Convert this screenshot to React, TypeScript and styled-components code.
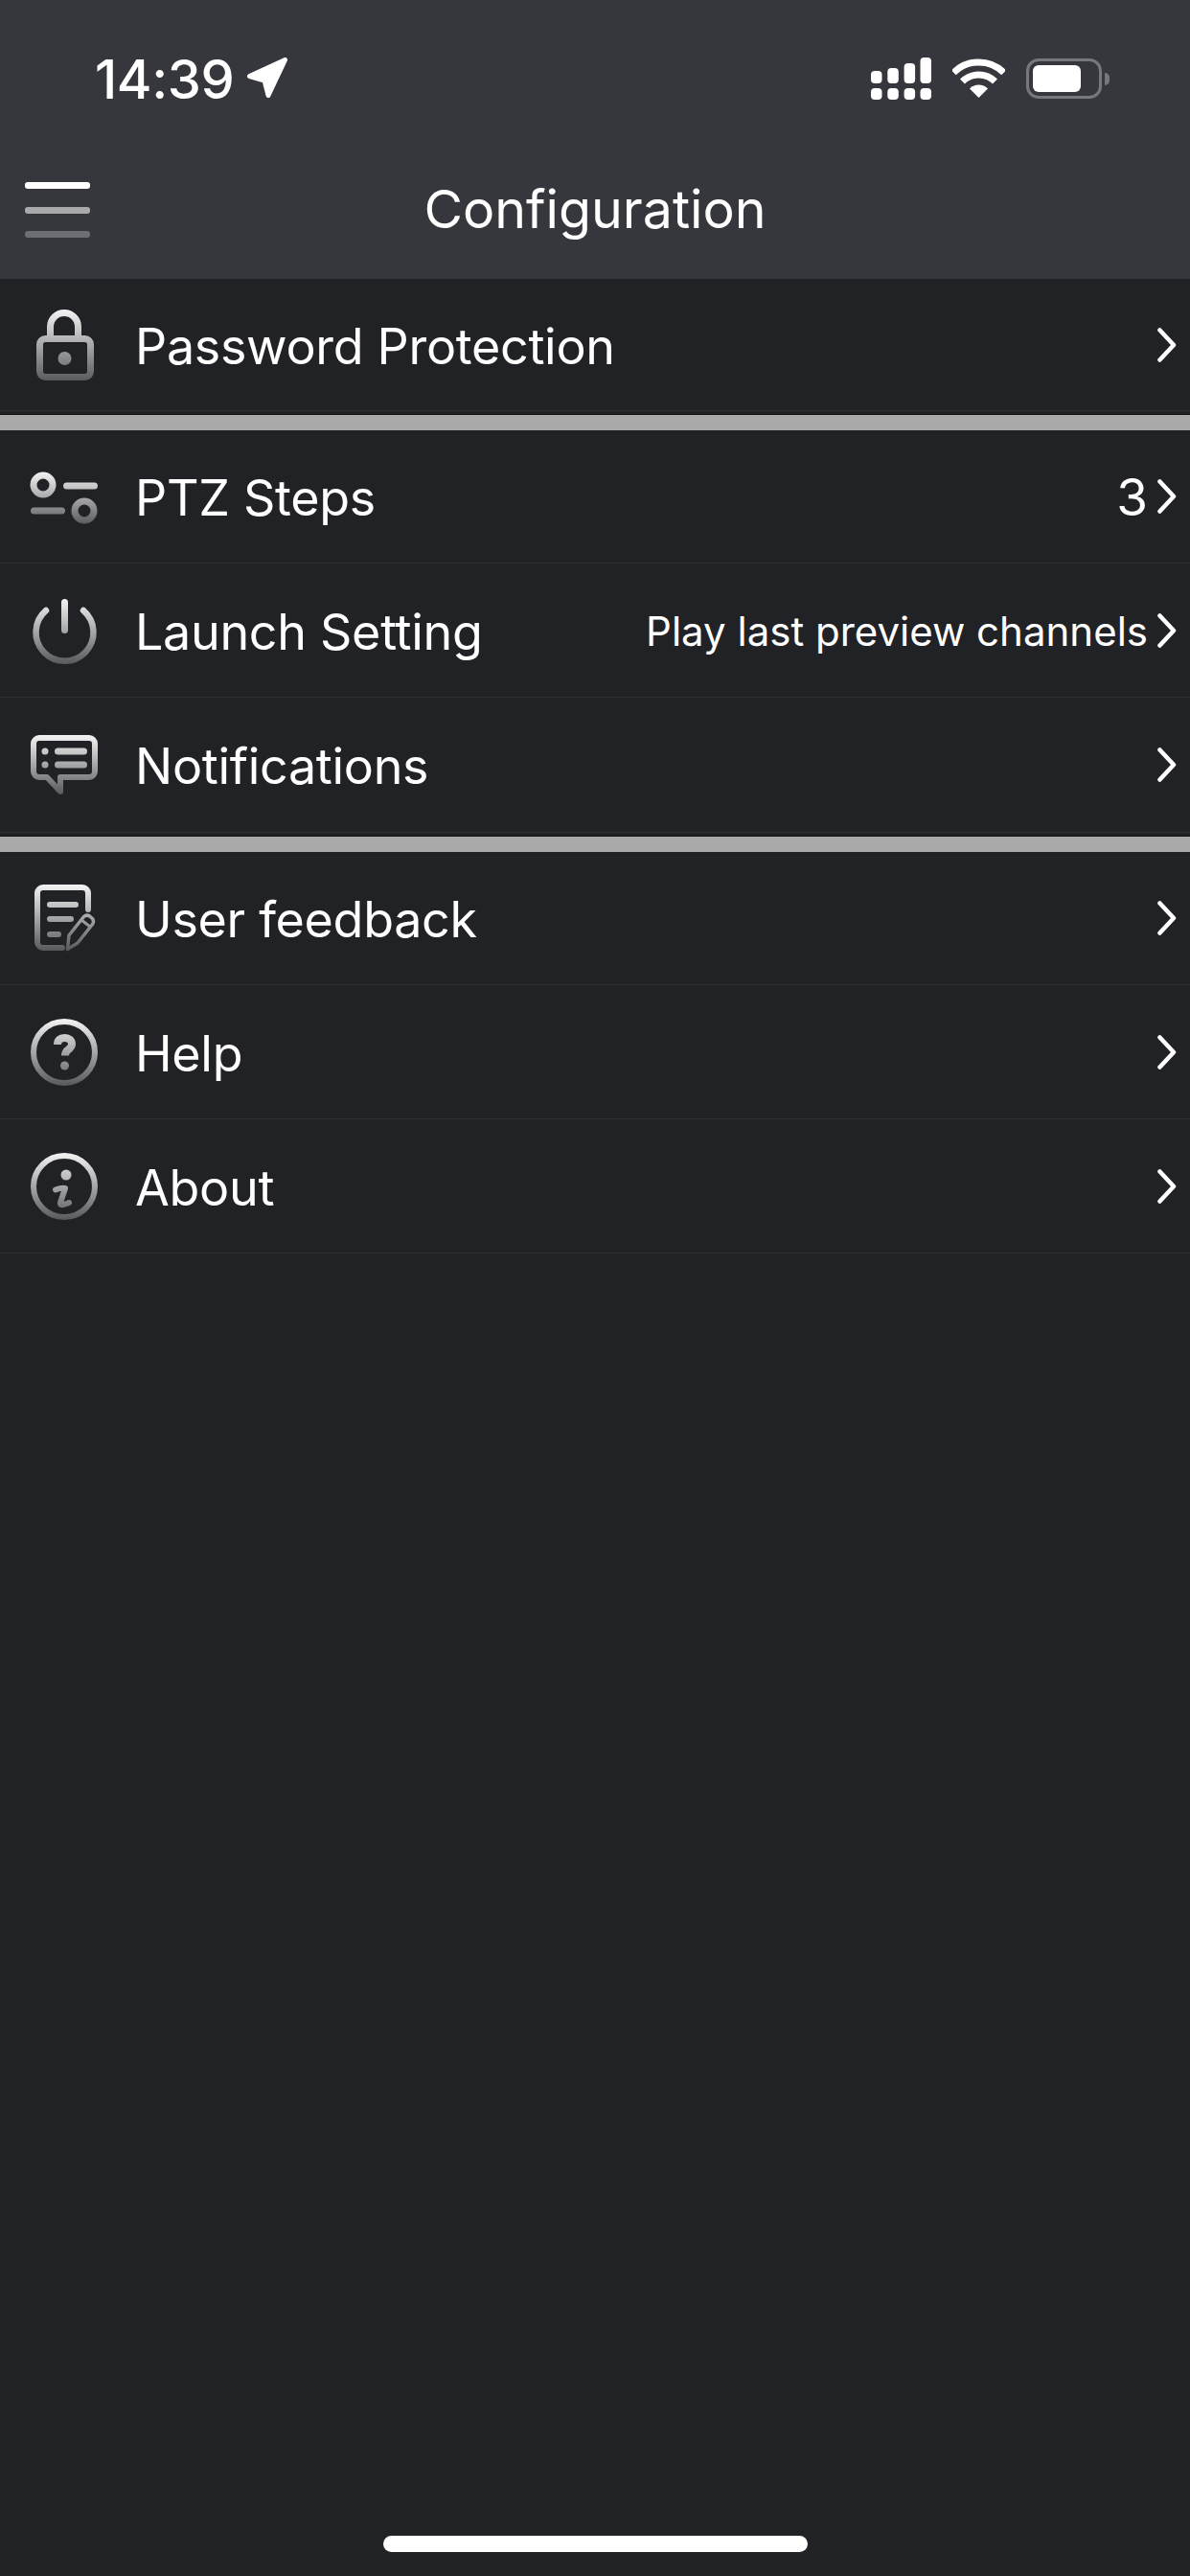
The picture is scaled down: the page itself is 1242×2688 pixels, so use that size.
import React, { useId } from 'react';
import styled, { createGlobalStyle } from 'styled-components';

const GlobalStyle = createGlobalStyle`
  html, body {
    margin: 0;
    padding: 0;
    background: #212226;
  }
  * {
    box-sizing: border-box;
  }
`;

const Page = styled.div`
  width: 1242px;
  height: 2688px;
  display: flex;
  flex-direction: column;
  overflow: hidden;
  background: #212226;
  color: #fff;
  font-family: Inter, Roboto, 'Liberation Sans', sans-serif;
`;

const Header = styled.header`
  height: 291px;
  flex: none;
  background: #36373d;
`;

const StatusBar = styled.div`
  height: 166px;
  padding: 60px 92px 0 99px;
  display: flex;
  justify-content: space-between;
  align-items: flex-start;
`;

const StatusLeft = styled.div`
  display: flex;
  align-items: flex-start;
  gap: 14px;
`;

const StatusRight = styled.div`
  display: flex;
  align-items: flex-start;
  gap: 22px;
`;

const Time = styled.span`
  font-size: 56px;
  line-height: 46px;
  font-weight: 500;
  letter-spacing: -0.4px;
`;

const Battery = styled.div`
  width: 79px;
  height: 42px;
  margin-top: 1px;
  padding: 4px;
  position: relative;
  border: 3px solid #77787c;
  border-radius: 13px;

  &::after {
    content: '';
    position: absolute;
    right: -11px;
    top: 12px;
    width: 5px;
    height: 13px;
    border-radius: 0 6px 6px 0;
    background: #77787c;
  }
`;

const BatteryFill = styled.div`
  width: 50px;
  height: 100%;
  border-radius: 6px;
  background: #fff;
`;

const NavBar = styled.div`
  height: 125px;
  padding-left: 26px;
  display: grid;
  grid-template-columns: 68px 1fr 68px;
  padding-right: 26px;
`;

const MenuButton = styled.div`
  height: 58px;
  margin-top: 24px;
  display: flex;
  flex-direction: column;
  justify-content: space-between;
`;

const MenuLine = styled.span<{ $color: string }>`
  display: block;
  height: 7px;
  border-radius: 3px;
  background: ${({ $color }) => $color};
`;

const Title = styled.h1`
  margin: 0;
  padding-top: 19px;
  text-align: center;
  font-size: 55.5px;
  line-height: 66px;
  font-weight: 400;
`;

const Section = styled.section`
  flex: none;
`;

const Row = styled.div<{ $height: number }>`
  height: ${({ $height }) => $height}px;
  padding-right: 14px;
  display: flex;
  align-items: center;
  border-bottom: 1px solid #2d2e31;
`;

const IconSlot = styled.div`
  width: 141px;
  flex: none;
  display: flex;
  justify-content: center;
  padding-right: 5px;
`;

const Label = styled.span`
  flex: 1;
  padding-top: 4px;
  font-size: 52px;
  line-height: 64px;
  letter-spacing: -0.3px;
`;

const Value = styled.span<{ $small?: boolean }>`
  padding-top: 2px;
  font-size: ${({ $small }) => ($small ? 42 : 53)}px;
  line-height: 64px;
  margin-right: 10px;
`;

const Separator = styled.div`
  flex: none;
  height: 17px;
  margin-top: 3px;
  background: #a9a9a9;
  border-top: 1px solid #0f0f11;
`;

const Spacer = styled.div`
  flex: 1;
`;

const HomeBar = styled.div`
  width: 443px;
  height: 17px;
  margin: 0 auto 25px;
  flex: none;
  border-radius: 9px;
  background: #fff;
`;

const Paint = ({
  y1 = 3,
  y2 = 78,
  children,
}: {
  y1?: number;
  y2?: number;
  children: (paint: string) => React.ReactNode;
}) => {
  const id = useId();
  const paint = `url(#${id})`;
  return (
    <svg width="80" height="80" viewBox="0 0 80 80" fill="none" strokeLinecap="round" strokeLinejoin="round">
      <defs>
        <linearGradient id={id} gradientUnits="userSpaceOnUse" x1="0" x2="0" y1={y1} y2={y2}>
          <stop offset="0" stopColor="#f4f4f4" />
          <stop offset="1" stopColor="#58595c" />
        </linearGradient>
      </defs>
      {children(paint)}
    </svg>
  );
};

const LockIcon = () => (
  <Paint>
    {(p) => (
      <>
        <rect x="13.5" y="33.5" width="53" height="40" rx="6" stroke={p} strokeWidth="7" />
        <path d="M24.5 30V21a14.5 14.5 0 0 1 29 0v9" stroke={p} strokeWidth="7" strokeLinecap="butt" />
        <circle cx="39.5" cy="54" r="7" fill={p} />
      </>
    )}
  </Paint>
);

const StepsIcon = () => (
  <Paint y1={14} y2={70}>
    {(p) => (
      <>
        <circle cx="17" cy="28" r="10" stroke={p} strokeWidth="7" />
        <path d="M41.5 29h29" stroke={p} strokeWidth="7" />
        <path d="M7.5 55h29" stroke={p} strokeWidth="7" />
        <circle cx="60" cy="55" r="10" stroke={p} strokeWidth="7" />
      </>
    )}
  </Paint>
);

const PowerIcon = () => (
  <Paint y1={7} y2={75}>
    {(p) => (
      <>
        <path d="M39.5 10.5v29" stroke={p} strokeWidth="7" />
        <path d="M20 19A30 30 0 1 0 59 19" stroke={p} strokeWidth="6.5" />
      </>
    )}
  </Paint>
);

const MessageIcon = () => (
  <Paint y1={9} y2={71}>
    {(p) => (
      <>
        <path
          d="M13 12h52a6 6 0 0 1 6 6v29a6 6 0 0 1-6 6H35v15L21 53h-8a6 6 0 0 1-6-6V18a6 6 0 0 1 6-6Z"
          stroke={p}
          strokeWidth="6"
        />
        <circle cx="19" cy="26" r="3.5" fill={p} />
        <circle cx="19" cy="40" r="3.5" fill={p} />
        <path d="M32.5 26h27M32.5 40h27" stroke={p} strokeWidth="7" />
      </>
    )}
  </Paint>
);

const FeedbackIcon = () => (
  <Paint y1={5} y2={74}>
    {(p) => (
      <>
        <path d="M64 31V14a6 6 0 0 0-6-6H17a6 6 0 0 0-6 6v51a6 6 0 0 0 6 6h20" stroke={p} strokeWidth="6" />
        <path d="M24 26h27M24 41h22M24 57h9" stroke={p} strokeWidth="6" />
        <path d="M42.5 72.5 44 58l15.5-19.5q3-2.5 6-.5l3 2.5q2 3 0 6L53 66Z" stroke={p} strokeWidth="3.5" />
        <path d="M57 42l9 7" stroke={p} strokeWidth="3" />
      </>
    )}
  </Paint>
);

const HelpIcon = () => (
  <Paint y1={5} y2={75}>
    {(p) => (
      <>
        <circle cx="39" cy="40" r="32" stroke={p} strokeWidth="6" />
        <path
          d="M32 32c0-5 3-7 7.5-7S47 27.500 47 31.500c0 3-2 4.500-4 6s-3 3-3 6"
          stroke={p}
          strokeWidth="8"
          strokeLinecap="butt"
        />
        <circle cx="39.500" cy="54" r="4.500" fill={p} />
      </>
    )}
  </Paint>
);

const InfoIcon = () => (
  <Paint y1={5} y2={75}>
    {(p) => (
      <>
        <circle cx="39" cy="40" r="32" stroke={p} strokeWidth="6" />
        <circle cx="41" cy="28" r="5.500" fill={p} />
        <path d="M30 43.500c4-1.500 7-2 10-1.500l-5 15c-.5 3 2 3 9 0" stroke={p} strokeWidth="6" />
      </>
    )}
  </Paint>
);

const LocationArrow = () => (
  <svg width="42" height="42" viewBox="0 0 42 42">
    <path
      d="M2.500 19.500 39.500 2.500 22 39.500 18 24Z"
      fill="#fff"
      stroke="#fff"
      strokeWidth="5"
      strokeLinejoin="round"
    />
  </svg>
);

const SignalIcon = () => (
  <svg width="63" height="44" viewBox="0 0 63 44" fill="#fff">
    <rect x="0" y="14" width="11.500" height="13" rx="4" />
    <rect x="17.300" y="11" width="11.500" height="16" rx="4" />
    <rect x="34.600" y="6" width="11.500" height="21" rx="4" />
    <rect x="51.500" y="0" width="11.500" height="27" rx="4" />
    <rect x="0" y="32" width="11.500" height="12" rx="4" />
    <rect x="17.300" y="32" width="11.500" height="12" rx="4" />
    <rect x="34.600" y="32" width="11.500" height="12" rx="4" />
    <rect x="51.500" y="32" width="11.500" height="12" rx="4" />
  </svg>
);

const WifiIcon = () => (
  <svg width="55" height="42" viewBox="0 0 55 42" fill="none" style={{ marginTop: 1 }}>
    <path d="M1.300 14.800a37 37 0 0 1 52.400 0" stroke="#fff" strokeWidth="7" />
    <path d="M10.500 24a24 24 0 0 1 34 0" stroke="#fff" strokeWidth="7" />
    <path d="M27.500 41 18 31.500a13.500 13.500 0 0 1 19 0Z" fill="#fff" />
  </svg>
);

const Chevron = () => (
  <svg width="20" height="36" viewBox="0 0 20 36" fill="none">
    <path d="M2.500 2.500 17 18 2.500 33.500" stroke="#fff" strokeWidth="4.500" strokeLinecap="round" strokeLinejoin="round" />
  </svg>
);

type Item = {
  label: string;
  icon: React.ReactNode;
  height: number;
  value?: string;
  small?: boolean;
};

const groups: Item[][] = [
  [{ label: 'Password Protection', icon: <LockIcon />, height: 138 }],
  [
    { label: 'PTZ Steps', icon: <StepsIcon />, height: 139, value: '3' },
    { label: 'Launch Setting', icon: <PowerIcon />, height: 140, value: 'Play last preview channels', small: true },
    { label: 'Notifications', icon: <MessageIcon />, height: 141 },
  ],
  [
    { label: 'User feedback', icon: <FeedbackIcon />, height: 139 },
    { label: 'Help', icon: <HelpIcon />, height: 140 },
    { label: 'About', icon: <InfoIcon />, height: 140 },
  ],
];

export default function App() {
  return (
    <Page>
      <GlobalStyle />
      <Header>
        <StatusBar>
          <StatusLeft>
            <Time>14:39</Time>
            <LocationArrow />
          </StatusLeft>
          <StatusRight>
            <SignalIcon />
            <WifiIcon />
            <Battery>
              <BatteryFill />
            </Battery>
          </StatusRight>
        </StatusBar>
        <NavBar>
          <MenuButton>
            <MenuLine $color="#ffffff" />
            <MenuLine $color="#a9a9ab" />
            <MenuLine $color="#6d6e72" />
          </MenuButton>
          <Title>Configuration</Title>
        </NavBar>
      </Header>
      {groups.map((items, index) => (
        <React.Fragment key={items[0].label}>
          {index > 0 && <Separator />}
          <Section>
            {items.map((item) => (
              <Row key={item.label} $height={item.height}>
                <IconSlot>{item.icon}</IconSlot>
                <Label>{item.label}</Label>
                {item.value && <Value $small={item.small}>{item.value}</Value>}
                <Chevron />
              </Row>
            ))}
          </Section>
        </React.Fragment>
      ))}
      <Spacer />
      <HomeBar />
    </Page>
  );
}
